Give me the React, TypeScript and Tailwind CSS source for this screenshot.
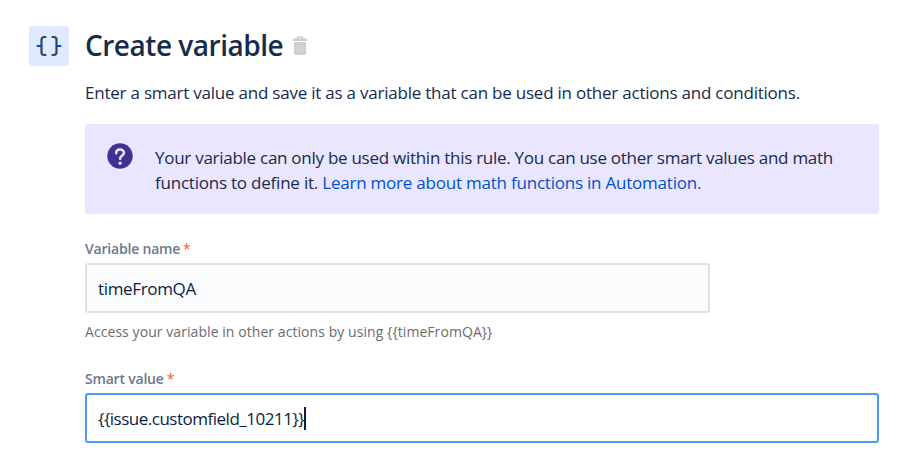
import React from "react";

function BracesIcon() {
  return (
    <svg width="26" height="22" viewBox="0 0 26 22" fill="none" strokeWidth="2.200" strokeLinecap="round" strokeLinejoin="round">
      <path d="M0.700 11H5M21 11h4.300" stroke="#0052cc" strokeLinecap="butt" />
      <path d="M9.500 2H8.200Q5.500 2 5.500 4.700V17.300Q5.500 20 8.200 20H9.500" stroke="#344563" />
      <path d="M16.500 2h1.300Q20.500 2 20.500 4.700V17.300Q20.500 20 17.800 20H16.500" stroke="#344563" />
    </svg>
  );
}

function TrashIcon() {
  return (
    <svg width="14" height="19" viewBox="0 0 14 19" fill="none">
      <path d="M4.500 3V1.200h5V3" stroke="#cccccc" strokeWidth="1.500" />
      <path d="M0 2.500h14V5H0zM1 6h12V17q0 1.800-1.800 1.800H2.800Q1 18.800 1 17z" fill="#cccccc" />
      <path d="M4.500 9v7M7 9v7M9.500 9v7" stroke="#dedede" strokeWidth="1" />
    </svg>
  );
}

function QuestionIcon() {
  return (
    <svg width="26" height="26" viewBox="0 0 26 26" fill="none">
      <circle cx="13" cy="13" r="12.700" fill="#403294" />
      <path d="M9.200 10.200C9.200 7.800 10.900 6.500 13 6.500s3.900 1.400 3.900 3.500c0 2.700-3.800 2.600-3.800 5.800" stroke="#eae6ff" strokeWidth="2.500" strokeLinecap="round" />
      <circle cx="13.100" cy="20.200" r="1.600" fill="#eae6ff" />
    </svg>
  );
}

function Label({ children }: { children: React.ReactNode }) {
  return (
    <div className="flex h-5 items-center whitespace-nowrap text-[14px] font-semibold text-[#6b778c]">
      <span className="tracking-[-0.200px]">{children}</span>
      <span className="ml-[3px] font-normal text-[#ff5630]">*</span>
    </div>
  );
}

export default function App() {
  return (
    <main className="flex h-[452px] w-[902px] gap-4 overflow-hidden bg-white pl-[29px] pt-[26px] font-['Open_Sans',sans-serif] text-[17px] text-[#172b4d]">
      <div className="flex size-10 shrink-0 items-center justify-center rounded-[3px] bg-[#deebff]">
        <BracesIcon />
      </div>
      <div className="w-[794px] shrink-0">
        <header className="flex h-[38px] items-center whitespace-nowrap">
          <h1 className="w-[208px] text-[28px] font-semibold tracking-[-0.480px]">Create variable</h1>
          <TrashIcon />
        </header>
        <p className="mt-[16px] h-[25px] whitespace-nowrap leading-[25px] tracking-[-0.225px]">
          Enter a smart value and save it as a variable that can be used in other actions and conditions.
        </p>
        <section className="mt-[19px] flex h-[90px] rounded-[3px] bg-[#eae6ff] pl-[22px] pt-[19px]">
          <QuestionIcon />
          <div className="ml-[22px] mt-[2px] whitespace-nowrap leading-[25px]">
            <p className="tracking-[-0.270px]">Your variable can only be used within this rule. You can use other smart values and math</p>
            <p className="tracking-[-0.220px]">
              functions to define it. <a className="text-[#0052cc]">Learn more about math functions in Automation.</a>
            </p>
          </div>
        </section>
        <div className="mt-[24px]">
          <Label>Variable name</Label>
          <div className="mt-[5px] flex h-[50px] w-[625px] items-center rounded-[3px] border-2 border-[#dfe1e6] bg-[#fafbfc] pl-[11px] pt-[2px] text-[#091e42]">
            <span className="tracking-[-0.350px]">timeFromQA</span>
          </div>
          <p className="mt-[9px] h-5 whitespace-nowrap text-[14px] leading-5 tracking-[0.065px] text-[#6c6c6c]">
            Access your variable in other actions by using {"{{timeFromQA}}"}
          </p>
        </div>
        <div className="mt-[26px]">
          <Label>Smart value</Label>
          <div className="mt-[5px] flex h-[50px] items-center rounded-[3px] border-2 border-[#4c9aff] bg-white pl-[11px] text-[#091e42]">
            <span className="pt-[2px] tracking-[-0.490px]">{"{{issue.customfield_10211}}"}</span>
            <span className="h-[23px] w-[2px] bg-[#091e42]" />
          </div>
        </div>
      </div>
    </main>
  );
}
